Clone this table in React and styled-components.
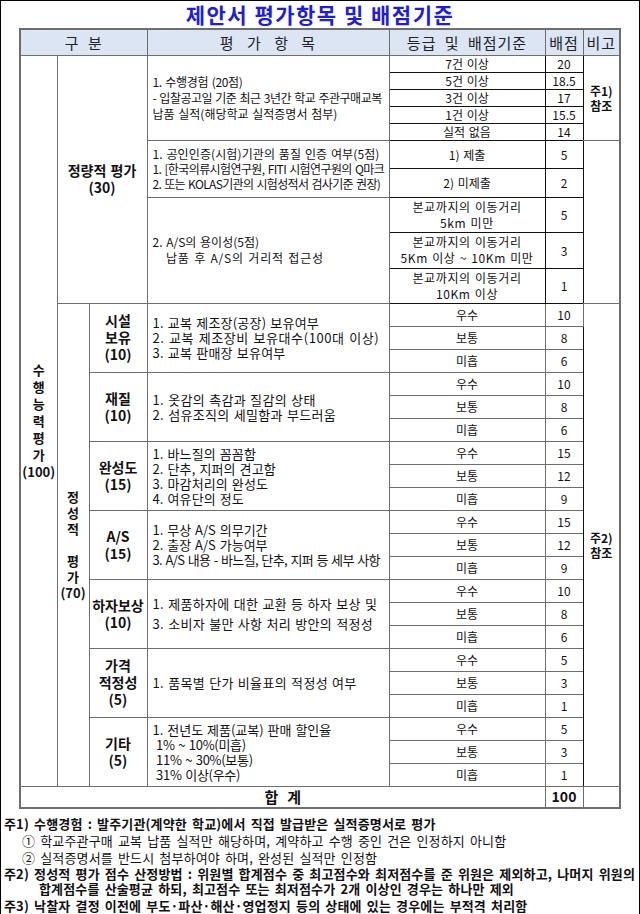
import React from 'react';
import styled, { createGlobalStyle } from 'styled-components';

const GlobalStyle = createGlobalStyle`
  body {
    margin: 0;
    background: #fff;
    font-family: "Noto Sans CJK KR", "Noto Sans", sans-serif;
    color: #111;
  }
`;

const quantRows = [
  { grade: '7건 이상', score: '20', h: 17 },
  { grade: '5건 이상', score: '18.5', h: 17 },
  { grade: '3건 이상', score: '17', h: 17 },
  { grade: '1건 이상', score: '15.5', h: 17 },
  { grade: '실적 없음', score: '14', h: 17 },
];

const distanceRows = [
  { grade: ['본교까지의 이동거리', '5km 미만'], score: '5', h: 35 },
  { grade: ['본교까지의 이동거리', '5Km 이상 ~ 10Km 미만'], score: '3', h: 36 },
  { grade: ['본교까지의 이동거리', '10Km 이상'], score: '1', h: 35 },
];

// each item line: [text, letter-spacing]
const qualGroups = [
  {
    label: ['시설', '보유', '(10)'],
    items: [
      ['1. 교복 제조장(공장) 보유여부', 0.2],
      ['2. 교복 제조장비 보유대수(100대 이상)', 0.6],
      ['3. 교복 판매장 보유여부', 0.2],
    ],
    scores: ['10', '8', '6'],
  },
  {
    label: ['재질', '(10)'],
    items: [
      ['1. 옷감의 촉감과 질감의 상태', 0.3],
      ['2. 섬유조직의 세밀함과 부드러움', 0.3],
    ],
    scores: ['10', '8', '6'],
  },
  {
    label: ['완성도', '(15)'],
    items: [
      ['1. 바느질의 꼼꼼함', 0.1],
      ['2. 단추, 지퍼의 견고함', 0.1],
      ['3. 마감처리의 완성도', 0.1],
      ['4. 여유단의 정도', 0.1],
    ],
    scores: ['15', '12', '9'],
  },
  {
    label: ['A/S', '(15)'],
    items: [
      ['1. 무상 A/S 의무기간', 0],
      ['2. 출장 A/S 가능여부', 0],
      ['3. A/S 내용 - 바느질, 단추, 지퍼 등 세부 사항', -0.6],
    ],
    scores: ['15', '12', '9'],
  },
  {
    label: ['하자보상', '(10)'],
    items: [
      ['1. 제품하자에 대한 교환 등 하자 보상 및', 0.3],
      ['3. 소비자 불만 사항 처리 방안의 적정성', 0.3],
    ],
    scores: ['10', '8', '6'],
    loose: true,
  },
  {
    label: ['가격', '적정성', '(5)'],
    items: [['1. 품목별 단가 비율표의 적정성 여부', 0.3]],
    scores: ['5', '3', '1'],
  },
  {
    label: ['기타', '(5)'],
    items: [
      ['1. 전년도 제품(교복) 판매 할인율', 0],
      ['\u00a01% ~ 10%(미흡)', -0.3],
      ['\u00a011% ~ 30%(보통)', -0.3],
      ['\u00a031% 이상(우수)', -0.3],
    ],
    scores: ['5', '3', '1'],
  },
];

const levels = ['우수', '보통', '미흡'];

function Lines({ lines }) {
  return lines.map((l, i) => (
    <React.Fragment key={i}>
      {i > 0 && <br />}
      {l}
    </React.Fragment>
  ));
}

function ItemLines({ lines }) {
  return lines.map(([text, ls], i) => (
    <React.Fragment key={i}>
      {i > 0 && <br />}
      <Ln $ls={ls}>{text}</Ln>
    </React.Fragment>
  ));
}

function App() {
  return (
    <Page>
      <GlobalStyle />
      <Title>제안서 평가항목 및 배점기준</Title>
      <Table>
        <colgroup>
          <col style={{ width: 37 }} />
          <col style={{ width: 32 }} />
          <col style={{ width: 58 }} />
          <col style={{ width: 242 }} />
          <col style={{ width: 156 }} />
          <col style={{ width: 38 }} />
          <col style={{ width: 37 }} />
        </colgroup>
        <tbody>
          <Row $h={26}>
            <Th colSpan={3}>구 분</Th>
            <Th $wide>평 가 항 목</Th>
            <Th>등급 및 배점기준</Th>
            <Th>배점</Th>
            <Th>비고</Th>
          </Row>

          {quantRows.map((r, i) => (
            <Row $h={r.h} key={r.grade}>
              {i === 0 && (
                <>
                  <Label rowSpan={31} $lh={17}>
                    <Lines lines={['수', '행', '능', '력', '평', '가', '(100)']} />
                  </Label>
                  <Label colSpan={2} rowSpan={10} $size={14} $lh={17}>
                    정량적 평가<br />(30)
                  </Label>
                  <Item rowSpan={5} $lh={16}>
                    <ItemLines
                      lines={[
                        ['1. 수행경험 (20점)', -0.3],
                        ['- 입찰공고일 기준 최근 3년간 학교 주관구매교복', -0.5],
                        ['납품 실적(해당학교 실적증명서 첨부)', 0],
                      ]}
                    />
                  </Item>
                </>
              )}
              <Td $dark>{r.grade}</Td>
              <Td $dark>{r.score}</Td>
              {i === 0 && (
                <Note rowSpan={5}>
                  주1)<br />참조
                </Note>
              )}
            </Row>
          ))}

          <Row $h={28}>
            <Item rowSpan={2}>
              <ItemLines
                lines={[
                  ['1. 공인인증(시험)기관의 품질 인증 여부(5점)', 0.1],
                  ['1. [한국의류시험연구원, FITI 시험연구원의 Q마크', -0.6],
                  ['2. 또는 KOLAS기관의 시험성적서 검사기준 권장)', -0.65],
                ]}
              />
            </Item>
            <Td $dark>1) 제출</Td>
            <Td $dark>5</Td>
            <Note rowSpan={5} />
          </Row>
          <Row $h={29}>
            <Td $dark>2) 미제출</Td>
            <Td $dark>2</Td>
          </Row>

          {distanceRows.map((r, i) => (
            <Row $h={r.h} key={r.score}>
              {i === 0 && (
                <Item rowSpan={3} $lh={16}>
                  <ItemLines
                    lines={[
                      ['2. A/S의 용이성(5점)', 0],
                      ['\u00a0\u00a0\u00a0납품 후 A/S의 거리적 접근성', 0.8],
                    ]}
                  />
                </Item>
              )}
              <Td $dark $lh={16} $ls={0.6}>
                <Lines lines={r.grade} />
              </Td>
              <Td $dark>{r.score}</Td>
            </Row>
          ))}

          {qualGroups.map((g, gi) =>
            levels.map((lv, li) => (
              <Row $h={23} key={`${gi}-${li}`}>
                {gi === 0 && li === 0 && (
                  <Label rowSpan={21} $lh={16}>
                    <Lines lines={['정', '성', '적', '\u00a0', '평', '가', '(70)']} />
                  </Label>
                )}
                {li === 0 && (
                  <>
                    <Label rowSpan={3} $size={14} $lh={17}>
                      <Lines lines={g.label} />
                    </Label>
                    <Item rowSpan={3} $lh={g.loose ? 20 : 15} $size={13}>
                      <ItemLines lines={g.items} />
                    </Item>
                  </>
                )}
                <Td>{lv}</Td>
                <Td>{g.scores[li]}</Td>
                {gi === 0 && li === 0 && (
                  <Note rowSpan={21}>
                    주2)<br />참조
                  </Note>
                )}
              </Row>
            ))
          )}

          <Row $h={22}>
            <Label colSpan={5} $size={15}>합&nbsp;&nbsp;계</Label>
            <Label $size={14}>100</Label>
            <Td />
          </Row>
        </tbody>
      </Table>

      <Notes>
        <NoteLine $bold>주1) 수행경험 : 발주기관(계약한 학교)에서 직접 발급받은 실적증명서로 평가</NoteLine>
        <NoteLine $indent={18}>① 학교주관구매 교복 납품 실적만 해당하며, 계약하고 수행 중인 건은 인정하지 아니함</NoteLine>
        <NoteLine $indent={18}>② 실적증명서를 반드시 첨부하여야 하며, 완성된 실적만 인정함</NoteLine>
        <NoteLine $bold $lh={15}>
          주2) 정성적 평가 점수 산정방법 : 위원별 합계점수 중 최고점수와 최저점수를 준 위원은 제외하고, 나머지 위원의
        </NoteLine>
        <NoteLine $bold $indent={35} $lh={16}>
          합계점수를 산술평균 하되, 최고점수 또는 최저점수가 2개 이상인 경우는 하나만 제외
        </NoteLine>
        <NoteLine $bold>주3) 낙찰자 결정 이전에 부도·파산·해산·영업정지 등의 상태에 있는 경우에는 부적격 처리함</NoteLine>
      </Notes>
    </Page>
  );
}

const Page = styled.div`
  width: 640px;
  height: 914px;
  box-sizing: border-box;
  border-left: 1px solid #000;
  border-top: 1px solid #000;
  border-right: 1px solid #000;
  overflow: hidden;
`;

const Title = styled.h1`
  margin: 0;
  height: 27px;
  line-height: 27px;
  text-align: center;
  font-size: 21px;
  font-weight: 700;
  color: #1c1ce6;
  letter-spacing: 1.5px;
`;

const Table = styled.table`
  margin-left: 18px;
  border-collapse: collapse;
  table-layout: fixed;
  width: 602px;
  border: 2px solid #6e6e6e;
`;

const Row = styled.tr`
  height: ${(p) => p.$h}px;
`;

const Th = styled.th`
  background: #dce5f4;
  border: 1px solid #6e6e6e;
  font-size: 15px;
  font-weight: 400;
  padding: 0;
  color: #222;
  white-space: nowrap;
  letter-spacing: 1px;
  word-spacing: ${(p) => (p.$wide ? 8 : 4)}px;
`;

const Td = styled.td`
  border: 1px solid ${(p) => (p.$dark ? '#111' : '#6e6e6e')};
  padding: 0;
  text-align: center;
  vertical-align: middle;
  font-size: ${(p) => p.$size || 12}px;
  line-height: ${(p) => p.$lh || 15}px;
  letter-spacing: ${(p) => p.$ls || 0}px;
  white-space: nowrap;
  word-spacing: 1px;
`;

const Item = styled(Td)`
  text-align: left;
  padding-left: 5px;
  overflow: hidden;
`;

const Ln = styled.span`
  letter-spacing: ${(p) => p.$ls}px;
`;

const Label = styled(Td)`
  font-weight: 700;
  font-size: ${(p) => p.$size || 13}px;
  line-height: ${(p) => p.$lh || 17}px;
`;

const Note = styled(Td)`
  font-weight: 700;
  font-size: 12px;
  line-height: 15px;
  border-left-color: #111;
`;

const Notes = styled.div`
  padding: 6px 0 0 3px;
`;

const NoteLine = styled.div`
  padding-left: ${(p) => p.$indent || 0}px;
  font-size: 13px;
  font-weight: ${(p) => (p.$bold ? 700 : 400)};
  line-height: ${(p) => p.$lh || 17}px;
  white-space: nowrap;
  word-spacing: 2px;
  letter-spacing: 0.15px;
`;

export default App;
